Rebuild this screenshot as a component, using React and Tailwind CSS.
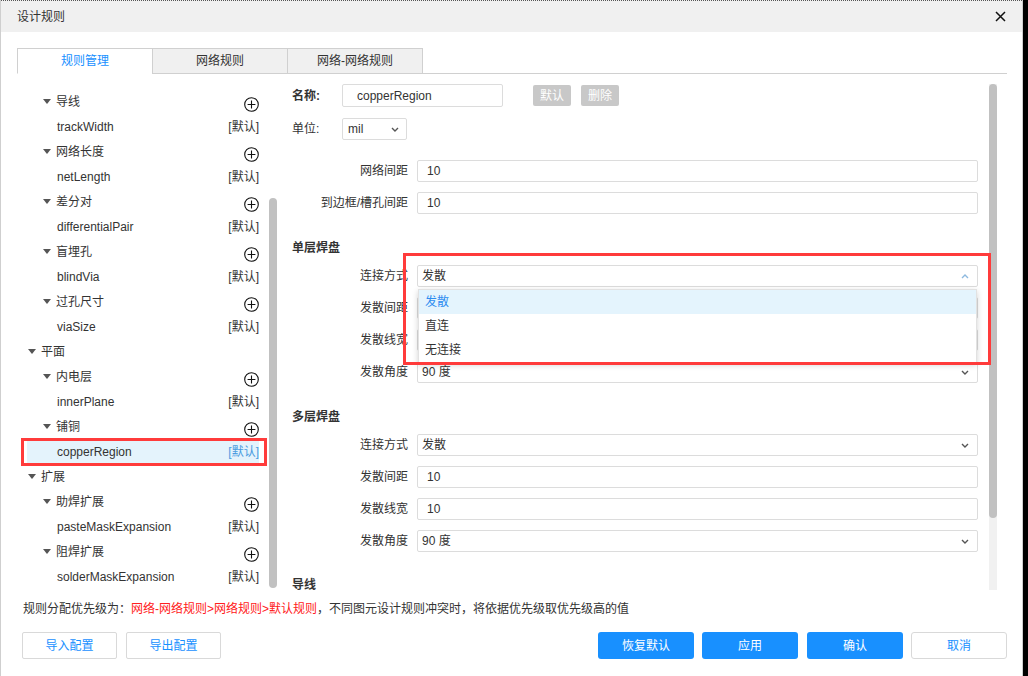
import React from "react";

const tree = [
  { t: "h2", label: "导线" },
  { t: "leaf", label: "trackWidth" },
  { t: "h2", label: "网络长度" },
  { t: "leaf", label: "netLength" },
  { t: "h2", label: "差分对" },
  { t: "leaf", label: "differentialPair" },
  { t: "h2", label: "盲埋孔" },
  { t: "leaf", label: "blindVia" },
  { t: "h2", label: "过孔尺寸" },
  { t: "leaf", label: "viaSize" },
  { t: "h1", label: "平面" },
  { t: "h2", label: "内电层" },
  { t: "leaf", label: "innerPlane" },
  { t: "h2", label: "铺铜" },
  { t: "leaf", label: "copperRegion", sel: true },
  { t: "h1", label: "扩展" },
  { t: "h2", label: "助焊扩展" },
  { t: "leaf", label: "pasteMaskExpansion" },
  { t: "h2", label: "阻焊扩展" },
  { t: "leaf", label: "solderMaskExpansion" },
];

function Tri() {
  return (
    <span className="w-0 h-0 shrink-0 border-l-[4px] border-r-[4px] border-t-[5px] border-l-transparent border-r-transparent border-t-[#555]" />
  );
}

function Plus() {
  return (
    <svg width="15" height="15" viewBox="0 0 15 15" className="shrink-0 mt-[6px]">
      <circle cx="7.5" cy="7.5" r="6.8" fill="none" stroke="#111" strokeWidth="1.1" />
      <path d="M7.5 3.6v7.8M3.6 7.5h7.8" stroke="#111" strokeWidth="1.1" />
    </svg>
  );
}

function Down() {
  return (
    <svg width="8" height="5" viewBox="0 0 8 5" className="shrink-0">
      <path d="M1 1l3 3 3-3" fill="none" stroke="#555" strokeWidth="1.4" />
    </svg>
  );
}

function Up() {
  return (
    <svg width="8" height="5" viewBox="0 0 8 5" className="shrink-0">
      <path d="M1 4l3-3 3 3" fill="none" stroke="#8db9df" strokeWidth="1.4" />
    </svg>
  );
}

function TreeRow({ r }) {
  if (r.t === "h1") {
    return (
      <div className="h-[25px] flex items-center pl-[1px] gap-[5px]">
        <Tri />
        <span>{r.label}</span>
      </div>
    );
  }
  if (r.t === "h2") {
    return (
      <div className="h-[25px] flex items-center justify-between pl-[16px]">
        <div className="flex items-center gap-[5px]">
          <Tri />
          <span>{r.label}</span>
        </div>
        <Plus />
      </div>
    );
  }
  return (
    <div
      className={
        r.sel
          ? "relative h-[25px] flex items-center justify-between pl-[30px] bg-[#e4f3fc]"
          : "relative h-[25px] flex items-center justify-between pl-[30px]"
      }
    >
      <span>{r.label}</span>
      <span className={r.sel ? "text-[#4a9be0]" : "text-[#333]"}>[默认]</span>
      {r.sel && (
        <div className="absolute left-[-6px] right-[-8px] top-[-1px] bottom-[-2px] border-[3px] border-[#ff3b3b]" />
      )}
    </div>
  );
}

function Label({ children }) {
  return <div className="w-[125px] shrink-0 pr-[9px] text-right">{children}</div>;
}

function InputRow({ label, value, className = "" }) {
  return (
    <div className={"flex items-center h-[22px] " + className}>
      <Label>{label}</Label>
      <div className="flex-1 h-[22px] border border-[#dcdcdc] rounded-[2px] flex items-center pl-[9px]">
        {value}
      </div>
    </div>
  );
}

function SelectRow({ label, value, className = "", open = false }) {
  return (
    <div className={"flex items-center h-[22px] " + className}>
      <Label>{label}</Label>
      <div className="relative flex-1 h-[22px] border border-[#dcdcdc] rounded-[2px] flex items-center justify-between pl-[4px] pr-[8px]">
        <span>{value}</span>
        {open ? <Up /> : <Down />}
        {open && (
          <div className="absolute left-0 right-0 top-[23px] z-10 bg-white border border-[#e2e2e2] shadow-[0_2px_6px_rgba(0,0,0,0.18)]">
            <div className="h-[24px] flex items-center pl-[6px] bg-[#e4f4fd] text-[#2d8cf0]">发散</div>
            <div className="h-[24px] flex items-center pl-[6px]">直连</div>
            <div className="h-[24px] flex items-center pl-[6px]">无连接</div>
          </div>
        )}
      </div>
    </div>
  );
}

export default function App() {
  return (
    <div className="flex w-[1028px] h-[676px] overflow-hidden bg-black font-['Liberation_Sans','Noto_Sans_CJK_SC',sans-serif] text-[12px] text-[#333]">
      <div className="w-[1023px] h-full bg-white border-l border-r border-[#cfcfcf] flex flex-col">
        {/* title bar */}
        <div className="h-[32px] shrink-0 bg-[#f0f0f0] border-t border-dotted border-[#555] flex items-center justify-between pl-[16px] pr-[15px]">
          <span>设计规则</span>
          <svg width="11" height="11" viewBox="0 0 11 11" className="mr-[1px]">
            <path d="M1 1l9 9M10 1l-9 9" stroke="#111" strokeWidth="1.5" />
          </svg>
        </div>

        <div className="flex flex-col pl-[16px] pr-[15px]">
          {/* tabs */}
          <div className="mt-[16px] h-[26px] flex items-start border-b border-[#d0d0d0]">
            <div className="w-[136px] h-[26px] flex items-center justify-center bg-white border border-[#d0d0d0] border-b-white text-[#1890ff]">
              规则管理
            </div>
            <div className="-ml-px w-[136px] h-[26px] flex items-center justify-center bg-[#f0f0f0] border border-[#d0d0d0]">
              网络规则
            </div>
            <div className="-ml-px w-[136px] h-[26px] flex items-center justify-center bg-[#f0f0f0] border border-[#d0d0d0]">
              网络-网络规则
            </div>
          </div>

          {/* content */}
          <div className="flex h-[516px]">
            {/* left tree */}
            <div className="w-[261px] shrink-0 flex">
              <div className="w-[252px] px-[10px] pt-[15px] overflow-hidden">
                {tree.map((r, i) => (
                  <TreeRow key={i} r={r} />
                ))}
              </div>
              <div className="w-[8px] pt-[124px]">
                <div className="h-[390px] rounded-[4px] bg-[#c1c1c1]" />
              </div>
            </div>

            {/* right form */}
            <div className="relative flex-1 flex">
              <div className="flex-1 pl-[14px] pr-[11px] pt-[10px] overflow-hidden">
                <div className="flex items-center h-[23px]">
                  <div className="w-[50px] font-bold">名称:</div>
                  <div className="w-[161px] h-[23px] border border-[#dcdcdc] rounded-[2px] flex items-center pl-[14px]">
                    copperRegion
                  </div>
                  <div className="ml-[30px] w-[38px] h-[21px] bg-[#c8c8c8] text-white rounded-[2px] flex items-center justify-center">
                    默认
                  </div>
                  <div className="ml-[10px] w-[38px] h-[21px] bg-[#c8c8c8] text-white rounded-[2px] flex items-center justify-center">
                    删除
                  </div>
                </div>
                <div className="mt-[11px] flex items-center h-[22px]">
                  <div className="w-[50px]">单位:</div>
                  <div className="w-[65px] h-[22px] border border-[#dcdcdc] rounded-[2px] flex items-center justify-between pl-[5px] pr-[7px]">
                    <span>mil</span>
                    <Down />
                  </div>
                </div>

                <InputRow label="网络间距" value="10" className="mt-[20px]" />
                <InputRow label="到边框/槽孔间距" value="10" className="mt-[10px]" />

                <div className="mt-[24px] h-[20px] leading-[20px] font-bold">单层焊盘</div>
                <SelectRow label="连接方式" value="发散" className="mt-[7px]" open />
                <InputRow label="发散间距" value="10" className="mt-[10px]" />
                <InputRow label="发散线宽" value="10" className="mt-[10px]" />
                <SelectRow label="发散角度" value="90 度" className="mt-[10px]" />

                <div className="mt-[24px] h-[20px] leading-[20px] font-bold">多层焊盘</div>
                <SelectRow label="连接方式" value="发散" className="mt-[7px]" />
                <InputRow label="发散间距" value="10" className="mt-[10px]" />
                <InputRow label="发散线宽" value="10" className="mt-[10px]" />
                <SelectRow label="发散角度" value="90 度" className="mt-[10px]" />

                <div className="mt-[23px] h-[20px] leading-[20px] font-bold">导线</div>
              </div>
              <div className="w-[8px] mt-[10px] mr-[10px] bg-[#f1f1f1]">
                <div className="h-[434px] rounded-[4px] bg-[#c1c1c1]" />
              </div>

              {/* annotation box */}
              <div className="absolute left-[125px] top-[179px] w-[588px] h-[112px] border-[3px] border-[#ff3b3b] z-20 pointer-events-none" />
            </div>
          </div>

          {/* footer */}
          <div className="mt-[10px] h-[18px] leading-[18px] pl-[6px]">
            规则分配优先级为：
            <span className="text-[#ff2020]">网络-网络规则&gt;网络规则&gt;默认规则</span>
            ，不同图元设计规则冲突时，将依据优先级取优先级高的值
          </div>
          <div className="mt-[14px] h-[27px] flex justify-between">
            <div className="flex pl-[5px]">
              <div className="w-[95px] h-[27px] border border-[#d9d9d9] rounded-[2px] flex items-center justify-center text-[#1890ff]">
                导入配置
              </div>
              <div className="ml-[9px] w-[95px] h-[27px] border border-[#d9d9d9] rounded-[2px] flex items-center justify-center text-[#1890ff]">
                导出配置
              </div>
            </div>
            <div className="flex">
              <div className="w-[96px] h-[27px] rounded-[3px] bg-[#1890ff] text-white flex items-center justify-center">
                恢复默认
              </div>
              <div className="ml-[8px] w-[96px] h-[27px] rounded-[3px] bg-[#1890ff] text-white flex items-center justify-center">
                应用
              </div>
              <div className="ml-[9px] w-[96px] h-[27px] rounded-[3px] bg-[#1890ff] text-white flex items-center justify-center">
                确认
              </div>
              <div className="ml-[8px] w-[96px] h-[27px] rounded-[3px] border border-[#d9d9d9] text-[#1890ff] flex items-center justify-center">
                取消
              </div>
            </div>
          </div>
        </div>
      </div>
      <div className="flex-1 bg-black" />
    </div>
  );
}
